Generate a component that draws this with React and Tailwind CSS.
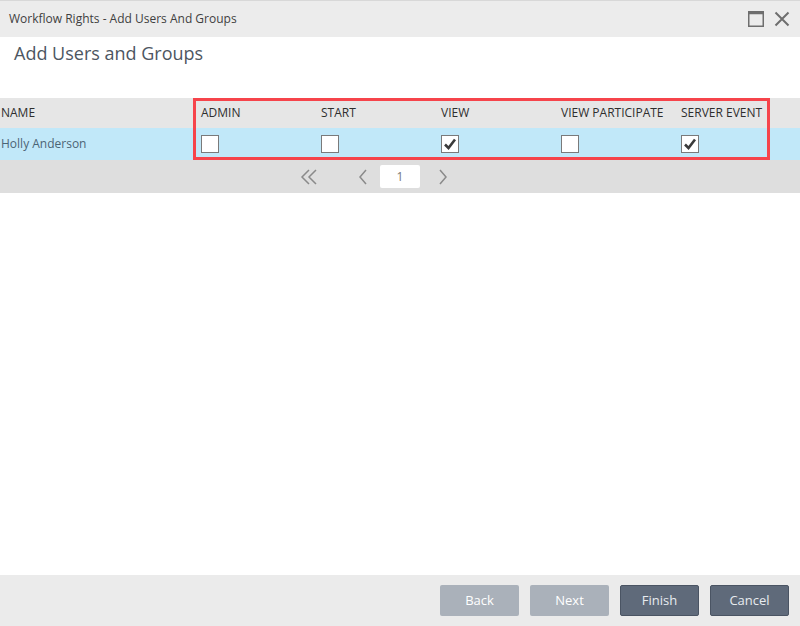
import { useState } from 'react';

const columns = [
  { key: 'admin', label: 'ADMIN' },
  { key: 'start', label: 'START' },
  { key: 'view', label: 'VIEW' },
  { key: 'viewParticipate', label: 'VIEW PARTICIPATE' },
  { key: 'serverEvent', label: 'SERVER EVENT' },
];

function Check({ checked, onChange }) {
  return (
    <button
      type="button"
      onClick={onChange}
      className="w-[18px] h-[18px] bg-white border border-[#7a7a7a] flex items-center justify-center"
    >
      {checked && (
        <svg width="14" height="14" viewBox="0 0 14 14">
          <path d="M2 7.5 L5.5 11 L12 2.5" fill="none" stroke="#3a3a3a" strokeWidth="2.6" strokeLinejoin="miter" />
        </svg>
      )}
    </button>
  );
}

export default function App() {
  const [rights, setRights] = useState({
    admin: false,
    start: false,
    view: true,
    viewParticipate: false,
    serverEvent: true,
  });

  const toggle = key => setRights(r => ({ ...r, [key]: !r[key] }));

  return (
    <div className="w-[800px] h-[626px] bg-white flex flex-col font-['Open_Sans',sans-serif] text-[#444]">
      {/* title bar */}
      <div className="h-[37px] bg-[#ececec] border-t border-[#d8d8d8] flex items-center justify-between pl-[9px] pr-[10px]">
        <span className="text-[12px] text-[#3f3f3f]">Workflow Rights - Add Users And Groups</span>
        <div className="flex items-center gap-[10px]">
          <svg width="16" height="16" viewBox="0 0 16 16">
            <rect x="0.75" y="0.75" width="14.5" height="14.5" fill="none" stroke="#6e6e6e" strokeWidth="1.5" />
            <rect x="0.75" y="0.75" width="14.5" height="2.5" fill="#6e6e6e" />
          </svg>
          <svg width="16" height="16" viewBox="0 0 16 16">
            <path d="M1.5 1.5 L14.5 14.5 M14.5 1.5 L1.5 14.5" stroke="#6e6e6e" strokeWidth="2" />
          </svg>
        </div>
      </div>

      <div className="h-[61px] pl-[14px]">
        <h1 className="text-[18px] text-[#4d5661] leading-[32px]">Add Users and Groups</h1>
      </div>

      {/* grid */}
      <div className="relative">
        <div className="h-[30px] bg-[#e6e6e6] flex items-center text-[12px] text-[#2e2e2e]">
          <div className="w-[194px] pl-[1px]">NAME</div>
          {columns.map(c => (
            <div key={c.key} className="w-[120px] pl-[7px]">{c.label}</div>
          ))}
        </div>
        <div className="h-[32px] bg-[#c1e8f9] flex items-center text-[12px]">
          <div className="w-[194px] pl-[1px] text-[#4c6475]">Holly Anderson</div>
          {columns.map(c => (
            <div key={c.key} className="w-[120px] pl-[7px]">
              <Check checked={rights[c.key]} onChange={() => toggle(c.key)} />
            </div>
          ))}
        </div>
        <div className="absolute left-[193px] top-0 w-[577px] h-[62px] border-[3px] border-[#f6444b] pointer-events-none" />

        {/* pager */}
        <div className="h-[33px] bg-[#dedede] flex items-center">
          <div className="w-[300px]" />
          <svg width="20" height="16" viewBox="0 0 20 16" className="mr-[38px]">
            <path d="M9 1 L2 8 L9 15 M16 1 L9 8 L16 15" fill="none" stroke="#8a8a8a" strokeWidth="1.5" />
          </svg>
          <svg width="10" height="16" viewBox="0 0 10 16" className="mr-[12px]">
            <path d="M8 1 L2 8 L8 15" fill="none" stroke="#8a8a8a" strokeWidth="1.5" />
          </svg>
          <div className="w-[40px] h-[23px] bg-white rounded-[2px] flex items-center justify-center text-[12px] text-[#777]">1</div>
          <svg width="10" height="16" viewBox="0 0 10 16" className="ml-[18px]">
            <path d="M2 1 L8 8 L2 15" fill="none" stroke="#8a8a8a" strokeWidth="1.5" />
          </svg>
        </div>
      </div>

      <div className="flex-1" />

      {/* footer */}
      <div className="h-[51px] bg-[#ebebeb] flex items-center justify-end gap-[11px] pr-[11px]">
        <button className="w-[79px] h-[31px] rounded-[2px] bg-[#aab1ba] text-white text-[13px]">Back</button>
        <button className="w-[79px] h-[31px] rounded-[2px] bg-[#aab1ba] text-white text-[13px]">Next</button>
        <button className="w-[79px] h-[31px] rounded-[2px] bg-[#5f6a7a] border border-[#4a5463] text-[#e8ecf0] text-[13px]">Finish</button>
        <button className="w-[79px] h-[31px] rounded-[2px] bg-[#5f6a7a] border border-[#4a5463] text-[#e8ecf0] text-[13px]">Cancel</button>
      </div>
    </div>
  );
}
